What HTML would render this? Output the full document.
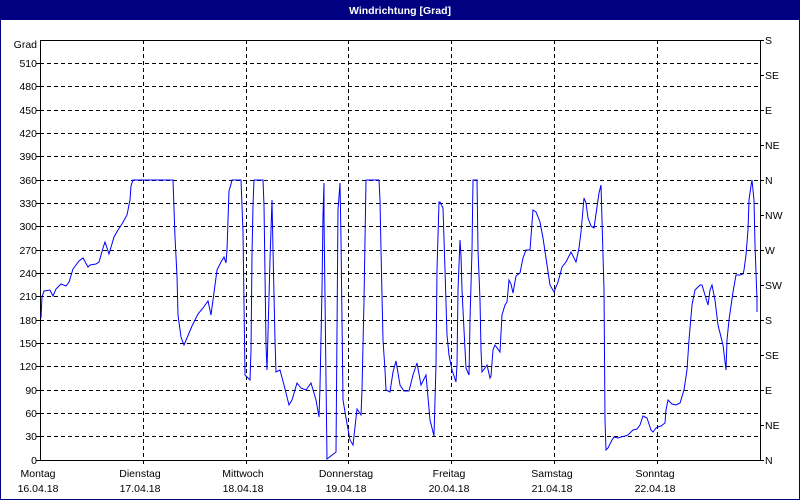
<!DOCTYPE html>
<html><head><style>
html,body{margin:0;padding:0;width:800px;height:500px;overflow:hidden;background:#fff}
svg{display:block}
text{font-family:"Liberation Sans",sans-serif;font-size:10.5px;fill:#000}
</style></head><body>
<svg width="800" height="500" viewBox="0 0 800 500">
<rect x="0" y="0" width="800" height="500" fill="#000080"/>
<rect x="1" y="20" width="798" height="479" fill="#fff"/>
<text x="400" y="14" text-anchor="middle" style="fill:#fff;font-weight:bold;font-size:10.5px">Windrichtung [Grad]</text>
<g stroke="#000" stroke-dasharray="4,3" stroke-width="1">
<path d="M40 63.5H760M40 86.5H760M40 110.5H760M40 133.5H760M40 156.5H760M40 180.5H760M40 203.5H760M40 226.5H760M40 250.5H760M40 273.5H760M40 296.5H760M40 320.5H760M40 343.5H760M40 366.5H760M40 390.5H760M40 413.5H760M40 436.5H760"/>
<path d="M143.5 40V460M246.5 40V460M348.5 40V460M451.5 40V460M554.5 40V460M657.5 40V460"/>
</g>
<g stroke="#000" stroke-width="1" fill="none">
<path d="M40.5 40V461M40 40.5H761M760.5 40V461M40 460.5H761"/>
<path d="M36 63.5H40M36 86.5H40M36 110.5H40M36 133.5H40M36 156.5H40M36 180.5H40M36 203.5H40M36 226.5H40M36 250.5H40M36 273.5H40M36 296.5H40M36 320.5H40M36 343.5H40M36 366.5H40M36 390.5H40M36 413.5H40M36 436.5H40M36 460.5H40"/>
<path d="M760 40.5H764M760 75.5H764M760 110.5H764M760 145.5H764M760 180.5H764M760 215.5H764M760 250.5H764M760 285.5H764M760 320.5H764M760 355.5H764M760 390.5H764M760 425.5H764M760 460.5H764"/>
<path d="M143.5 460V464M246.5 460V464M348.5 460V464M451.5 460V464M554.5 460V464M657.5 460V464"/>
</g>
<g text-anchor="end">
<text x="37" y="48">Grad</text>
<text x="37" y="67">510</text><text x="37" y="90">480</text><text x="37" y="114">450</text><text x="37" y="137">420</text><text x="37" y="160">390</text><text x="37" y="184">360</text><text x="37" y="207">330</text><text x="37" y="230">300</text><text x="37" y="254">270</text><text x="37" y="277">240</text><text x="37" y="300">210</text><text x="37" y="324">180</text><text x="37" y="347">150</text><text x="37" y="370">120</text><text x="37" y="394">90</text><text x="37" y="417">60</text><text x="37" y="440">30</text><text x="37" y="464">0</text>
</g>
<g>
<text x="765" y="44">S</text><text x="765" y="79">SE</text><text x="765" y="114">E</text><text x="765" y="149">NE</text><text x="765" y="184">N</text><text x="765" y="219">NW</text><text x="765" y="254">W</text><text x="765" y="289">SW</text><text x="765" y="324">S</text><text x="765" y="359">SE</text><text x="765" y="394">E</text><text x="765" y="429">NE</text><text x="765" y="464">N</text>
</g>
<g text-anchor="middle">
<text x="38" y="477">Montag</text><text x="38" y="492">16.04.18</text>
<text x="140" y="477">Dienstag</text><text x="140" y="492">17.04.18</text>
<text x="243" y="477">Mittwoch</text><text x="243" y="492">18.04.18</text>
<text x="346" y="477">Donnerstag</text><text x="346" y="492">19.04.18</text>
<text x="449" y="477">Freitag</text><text x="449" y="492">20.04.18</text>
<text x="552" y="477">Samstag</text><text x="552" y="492">21.04.18</text>
<text x="655" y="477">Sonntag</text><text x="655" y="492">22.04.18</text>
</g>
<polyline fill="none" stroke="#0000ff" stroke-width="1" points="41,318 42,297 44,291 50,290 53,296 56,289 61,284 66,286 69,282 73,269 79,261 83,258 88,267 90,265 96,264 99,262 103,248 105,242 109,254 114,237 118,230 122,224 127,215 130,200 131,186 133,180 173,180 175,237 177,276 178,315 181,337 184,345 192,326 198,314 203,308 208,301 211,315 217,270 221,262 224,257 226,263 227,250 229,191 231,184 232,180 241,180 243,232 245,375 250,380 251,350 252,255 253,205 254,180 263,180 264,205 266,344 267,370 270,260 272,200 273,250 275,340 276,372 280,370 284,385 289,405 292,400 297,383 301,388 306,390 311,383 316,400 319,417 320,387 322,290 323,215 324,183 324,217 327,459 336,452 338,210 340,183 341,240 343,400 346,418 350,440 353,445 356,418 357,409 361,415 362,390 364,300 366,180 379,180 380,200 381,250 383,340 385,370 386,390 390,392 393,372 396,361 400,385 404,391 409,391 413,375 417,363 421,385 426,375 430,420 434,436 436,365 437,270 439,202 440,202 443,208 445,270 447,335 449,355 452,370 456,382 457,365 458,290 460,240 461,256 462,290 464,330 466,368 469,375 470,320 472,250 473,180 477,180 478,250 480,300 481,350 482,372 485,368 487,365 490,378 491,376 493,350 495,345 500,352 502,315 505,305 507,302 509,280 511,284 513,293 516,276 520,273 523,258 526,250 530,250 533,210 536,212 540,222 543,238 546,258 550,285 554,292 558,282 562,267 566,262 571,252 576,262 579,248 581,232 584,198 586,203 588,218 591,226 594,228 596,214 599,193 601,185 604,290 605,420 606,450 608,448 612,440 614,437 618,438 621,437 625,436 628,435 633,430 637,429 640,425 643,416 647,418 651,430 653,432 656,428 658,427 661,426 665,423 666,410 668,400 672,404 676,405 680,403 684,390 687,370 689,340 692,305 695,290 700,285 702,285 705,295 708,305 710,290 712,285 715,300 718,325 723,345 726,370 727,340 729,320 733,292 736,275 740,275 743,274 744,270 746,255 748,230 749,200 751,186 752,180 754,200 755,245 757,300 757,312"/>
</svg>
</body></html>
